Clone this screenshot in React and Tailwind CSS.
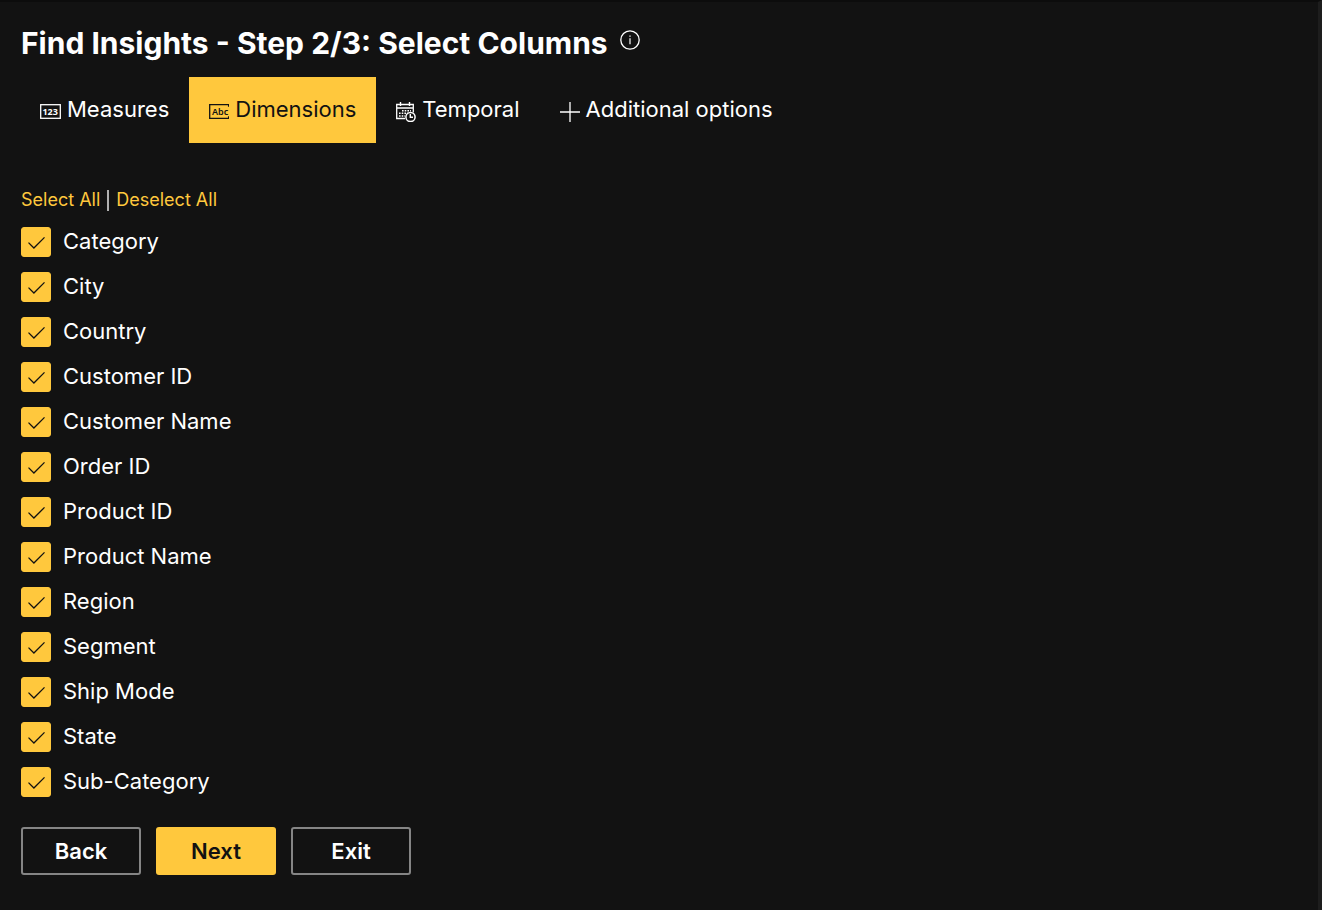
import { useState } from 'react'

const COLUMNS = [
  'Category',
  'City',
  'Country',
  'Customer ID',
  'Customer Name',
  'Order ID',
  'Product ID',
  'Product Name',
  'Region',
  'Segment',
  'Ship Mode',
  'State',
  'Sub-Category',
]

function InfoIcon() {
  return (
    <svg width="20" height="20" viewBox="0 0 20 20" fill="none" stroke="currentColor" aria-hidden="true">
      <circle cx="10" cy="10" r="9.2" strokeWidth="1.3" />
      <path d="M10 8.2v6" strokeWidth="1.2" />
      <path d="M10 5.4v1.4" strokeWidth="1.3" />
    </svg>
  )
}

function MeasuresIcon() {
  return (
    <svg width="21" height="20" viewBox="0 0 21 20" fill="none" aria-hidden="true">
      <rect x="0.7" y="2.7" width="19.6" height="13.6" stroke="currentColor" strokeWidth="1.3" />
      <text x="2.4" y="13" fill="currentColor" className="font-['Noto_Sans',sans-serif] text-[9px] font-bold">
        123
      </text>
    </svg>
  )
}

function DimensionsIcon() {
  return (
    <svg width="20" height="20" viewBox="0 0 20 20" fill="none" aria-hidden="true">
      <path d="M20 2.7H.7v13.6H20M19.6 2.7v2M19.6 14.3v2" stroke="currentColor" strokeWidth="1.3" />
      <text x="3" y="13" fill="currentColor" className="font-['Noto_Sans',sans-serif] text-[9px] font-semibold">
        Abc
      </text>
    </svg>
  )
}

function TemporalIcon() {
  return (
    <svg width="20" height="20" viewBox="0 0 20 20" fill="none" stroke="currentColor" aria-hidden="true">
      <path d="M9 16.5H.7V2.5h16.6v8M.7 6h16.6" strokeWidth="1.3" />
      <path d="M4.5 0v4M13.5 0v4" strokeWidth="1.4" />
      <path d="M6 8.7h9M3 11.3h9M3 13.9h6" strokeWidth="1.5" strokeDasharray="1.6 1.1" />
      <circle cx="14.5" cy="15" r="4.6" strokeWidth="1.5" />
      <path d="M14.3 12v3.3H17" strokeWidth="1.4" />
    </svg>
  )
}

function PlusIcon() {
  return (
    <svg width="20" height="20" viewBox="0 0 20 20" fill="none" stroke="currentColor" aria-hidden="true">
      <path d="M10 0v20M0 10h20" strokeWidth="1.3" />
    </svg>
  )
}

const TABS = [
  { id: 'measures', label: 'Measures', Icon: MeasuresIcon },
  { id: 'dimensions', label: 'Dimensions', Icon: DimensionsIcon },
  { id: 'temporal', label: 'Temporal', Icon: TemporalIcon },
  { id: 'options', label: 'Additional options', Icon: PlusIcon },
]

function ColumnCheckbox({ name, checked, onChange }) {
  return (
    <label className="flex w-fit cursor-pointer items-start gap-3 text-[22px] leading-7">
      <span className="relative h-[30px] w-[30px]">
        <input
          type="checkbox"
          checked={checked}
          onChange={onChange}
          className="block h-full w-full appearance-none rounded-[3px] border border-[#858585] checked:border-[#ffc83d] checked:bg-[#ffc83d]"
        />
        {checked && (
          <svg
            className="pointer-events-none absolute inset-0 text-[#121212]"
            width="30"
            height="30"
            viewBox="0 0 30 30"
            fill="none"
            stroke="currentColor"
            aria-hidden="true"
          >
            <path d="M7.5 15.6l5.4 5.4L23.500 10.400" strokeWidth="1.3" />
          </svg>
        )}
      </span>
      <span>{name}</span>
    </label>
  )
}

export default function App() {
  const [activeTab, setActiveTab] = useState('dimensions')
  const [selected, setSelected] = useState(COLUMNS)

  function toggle(name) {
    setSelected((prev) => (prev.includes(name) ? prev.filter((c) => c !== name) : [...prev, name]))
  }

  return (
    <div className="min-h-screen border-t-2 border-r-4 border-t-[#0c0c0c] border-r-[#1d1d1d] bg-[#121212] px-[21px] pt-5 pb-8 font-['Inter',sans-serif] text-white">
      <header className="flex items-start gap-3">
        <h1 className="text-[30px] leading-[42px] font-bold">Find Insights - Step 2/3: Select Columns</h1>
        <button type="button" aria-label="About this step" className="mt-2">
          <InfoIcon />
        </button>
      </header>

      <nav className="-ml-px mt-[13px] flex">
        {TABS.map(({ id, label, Icon }) => (
          <button
            key={id}
            type="button"
            onClick={() => setActiveTab(id)}
            className={
              id === activeTab
                ? 'flex h-[66px] items-center gap-1.5 bg-[#ffc83d] px-5 text-[22px] text-[#121212]'
                : 'flex h-[66px] items-center gap-1.5 px-5 text-[22px]'
            }
          >
            <span className="pt-1">
              <Icon />
            </span>
            <span className="pb-0.5">{label}</span>
          </button>
        ))}
      </nav>

      <main className="mt-[42px]">
        <div className="flex items-center gap-[7px] text-[18px] leading-[30px]">
          <button type="button" className="text-[#ffc83d]" onClick={() => setSelected(COLUMNS)}>
            Select All
          </button>
          <span className="h-[21px] w-0.5 bg-[#b0b0b0]" />
          <button type="button" className="text-[#ffc83d]" onClick={() => setSelected([])}>
            Deselect All
          </button>
        </div>

        <div className="mt-3 flex flex-col gap-[15px]">
          {COLUMNS.map((name) => (
            <ColumnCheckbox key={name} name={name} checked={selected.includes(name)} onChange={() => toggle(name)} />
          ))}
        </div>
      </main>

      <footer className="mt-[30px] flex gap-[15px] text-[22px] font-semibold">
        <button type="button" className="h-12 w-[120px] rounded-[3px] border-2 border-[#858585]">
          Back
        </button>
        <button type="button" className="h-12 w-[120px] rounded-[3px] bg-[#ffc83d] text-[#121212]">
          Next
        </button>
        <button type="button" className="h-12 w-[120px] rounded-[3px] border-2 border-[#858585]">
          Exit
        </button>
      </footer>
    </div>
  )
}
